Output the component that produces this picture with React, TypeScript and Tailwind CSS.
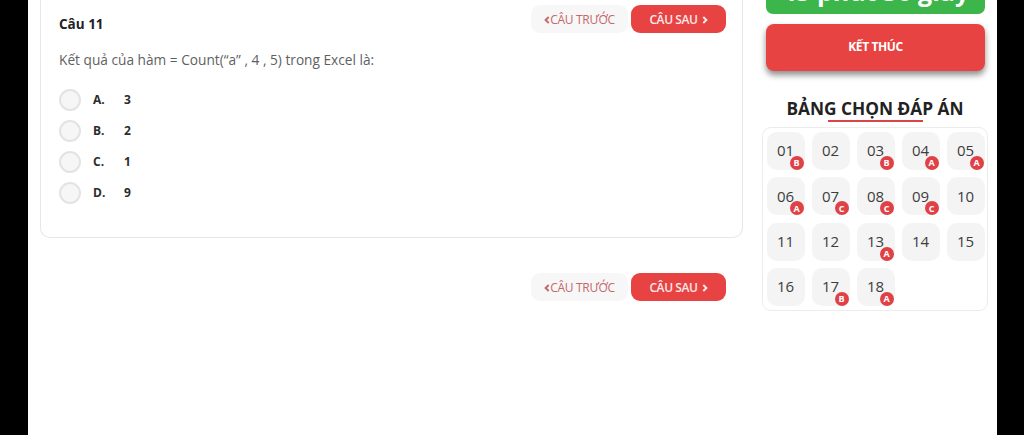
import React from "react";

const font = { fontFamily: '"Open Sans", "Noto Sans", sans-serif' };

const options = [
  ["A.", "3"],
  ["B.", "2"],
  ["C.", "1"],
  ["D.", "9"],
];

const cells: [string, string?][] = [
  ["01", "B"], ["02"], ["03", "B"], ["04", "A"], ["05", "A"],
  ["06", "A"], ["07", "C"], ["08", "C"], ["09", "C"], ["10"],
  ["11"], ["12"], ["13", "A"], ["14"], ["15"],
  ["16"], ["17", "B"], ["18", "A"],
];

function Chevron({ left }: { left?: boolean }) {
  return (
    <svg width="6" height="8" viewBox="0 0 6 8" className="shrink-0">
      <path
        d={left ? "M4.7 1 L1.6 4 L4.7 7" : "M1.3 1 L4.4 4 L1.3 7"}
        fill="none"
        stroke="currentColor"
        strokeWidth="1.9"
      />
    </svg>
  );
}

function Nav() {
  return (
    <div className="flex items-center gap-[3px]">
      <button className="w-[97px] h-[28px] rounded-[9px] bg-[#f7f7f7] text-[#c4686c] text-[12px] flex items-center justify-center tracking-[-0.3px] pt-[1px]">
        <Chevron left />
        CÂU TRƯỚC
      </button>
      <button className="w-[95px] h-[28px] rounded-[9px] bg-[#e84343] text-[#fbeaea] text-[12px] font-semibold flex items-center justify-center tracking-[-0.4px] pt-[1px]">
        CÂU SAU
        <span className="ml-[4px] flex">
          <Chevron />
        </span>
      </button>
    </div>
  );
}

export default function App() {
  return (
    <div style={font} className="w-[1024px] h-[435px] overflow-hidden bg-black pl-[28px] pr-[27px]">
      <div className="h-full bg-white flex pl-[12px]">
        <div className="w-[703px] shrink-0 flex flex-col">
          <div className="h-[239px] -mt-[1px] border border-t-0 border-[#e7e7e7] rounded-b-[10px] pl-[18px] pr-[16px] pt-[6px]">
            <div className="flex items-start justify-between">
              <div className="text-[13.5px] font-bold text-[#222] mt-[10px] leading-[18px]">Câu 11</div>
              <Nav />
            </div>
            <p className="text-[13.7px] text-[#5f5f5f] mt-[17px] leading-[20px]">Kết quả của hàm = Count(“a” , 4 , 5) trong Excel là:</p>
            <div className="mt-[19px] flex flex-col gap-[9px]">
              {options.map(([l, v]) => (
                <div key={l} className="flex items-center h-[22px]">
                  <span className="w-[22px] h-[22px] rounded-full border-2 border-[#e3e3e3] bg-[#f6f6f6] shrink-0" />
                  <span className="ml-[12px] w-[31px] text-[12px] font-bold text-[#2c2c2c]">{l}</span>
                  <span className="text-[12px] font-bold text-[#2c2c2c]">{v}</span>
                </div>
              ))}
            </div>
          </div>
          <div className="flex justify-end pr-[17px] mt-[35px]">
            <Nav />
          </div>
        </div>
        <div className="w-[226px] ml-[19px] shrink-0 flex flex-col">
          <div className="ml-[4px] mr-[3px] h-[14px] bg-[#3cb54a] rounded-b-[7px] overflow-hidden flex items-end justify-center">
            <span className="text-[25px] font-bold text-white leading-[32px] mb-[7px] whitespace-nowrap">45 phút 36 giây</span>
          </div>
          <button className="ml-[4px] mr-[3px] mt-[10px] h-[47px] rounded-[8px] bg-[#e84343] text-white text-[12px] font-bold tracking-[-0.4px] pb-[2px] shadow-[0_4px_6px_rgba(0,0,0,0.45)]">
            KẾT THÚC
          </button>
          <div className="relative mt-[23px] h-[30px] text-center text-[17.3px] font-bold text-[#222] leading-[30px]">
            BẢNG CHỌN ĐÁP ÁN
            <span className="absolute left-[66px] top-[26px] w-[95px] h-[2px] bg-[#d9434a]" />
          </div>
          <div className="mt-[3px] h-[184px] border border-[#ececec] rounded-[9px] pl-[3.5px] pt-[4px] grid grid-cols-[repeat(5,38px)] grid-rows-[repeat(4,38px)] gap-x-[7px] gap-y-[7.33px]">
            {cells.map(([n, a]) => (
              <div key={n} className="relative rounded-[10px] bg-[#f4f4f4] flex items-center justify-center text-[15px] text-[#3d3d3d] pb-[1px]">
                {n}
                {a && (
                  <span className="absolute right-[1px] bottom-[1px] w-[14px] h-[14px] rounded-full bg-[#e04146] text-white text-[9px] font-bold flex items-center justify-center translate-y-[1px]">
                    {a}
                  </span>
                )}
              </div>
            ))}
          </div>
        </div>
      </div>
    </div>
  );
}
